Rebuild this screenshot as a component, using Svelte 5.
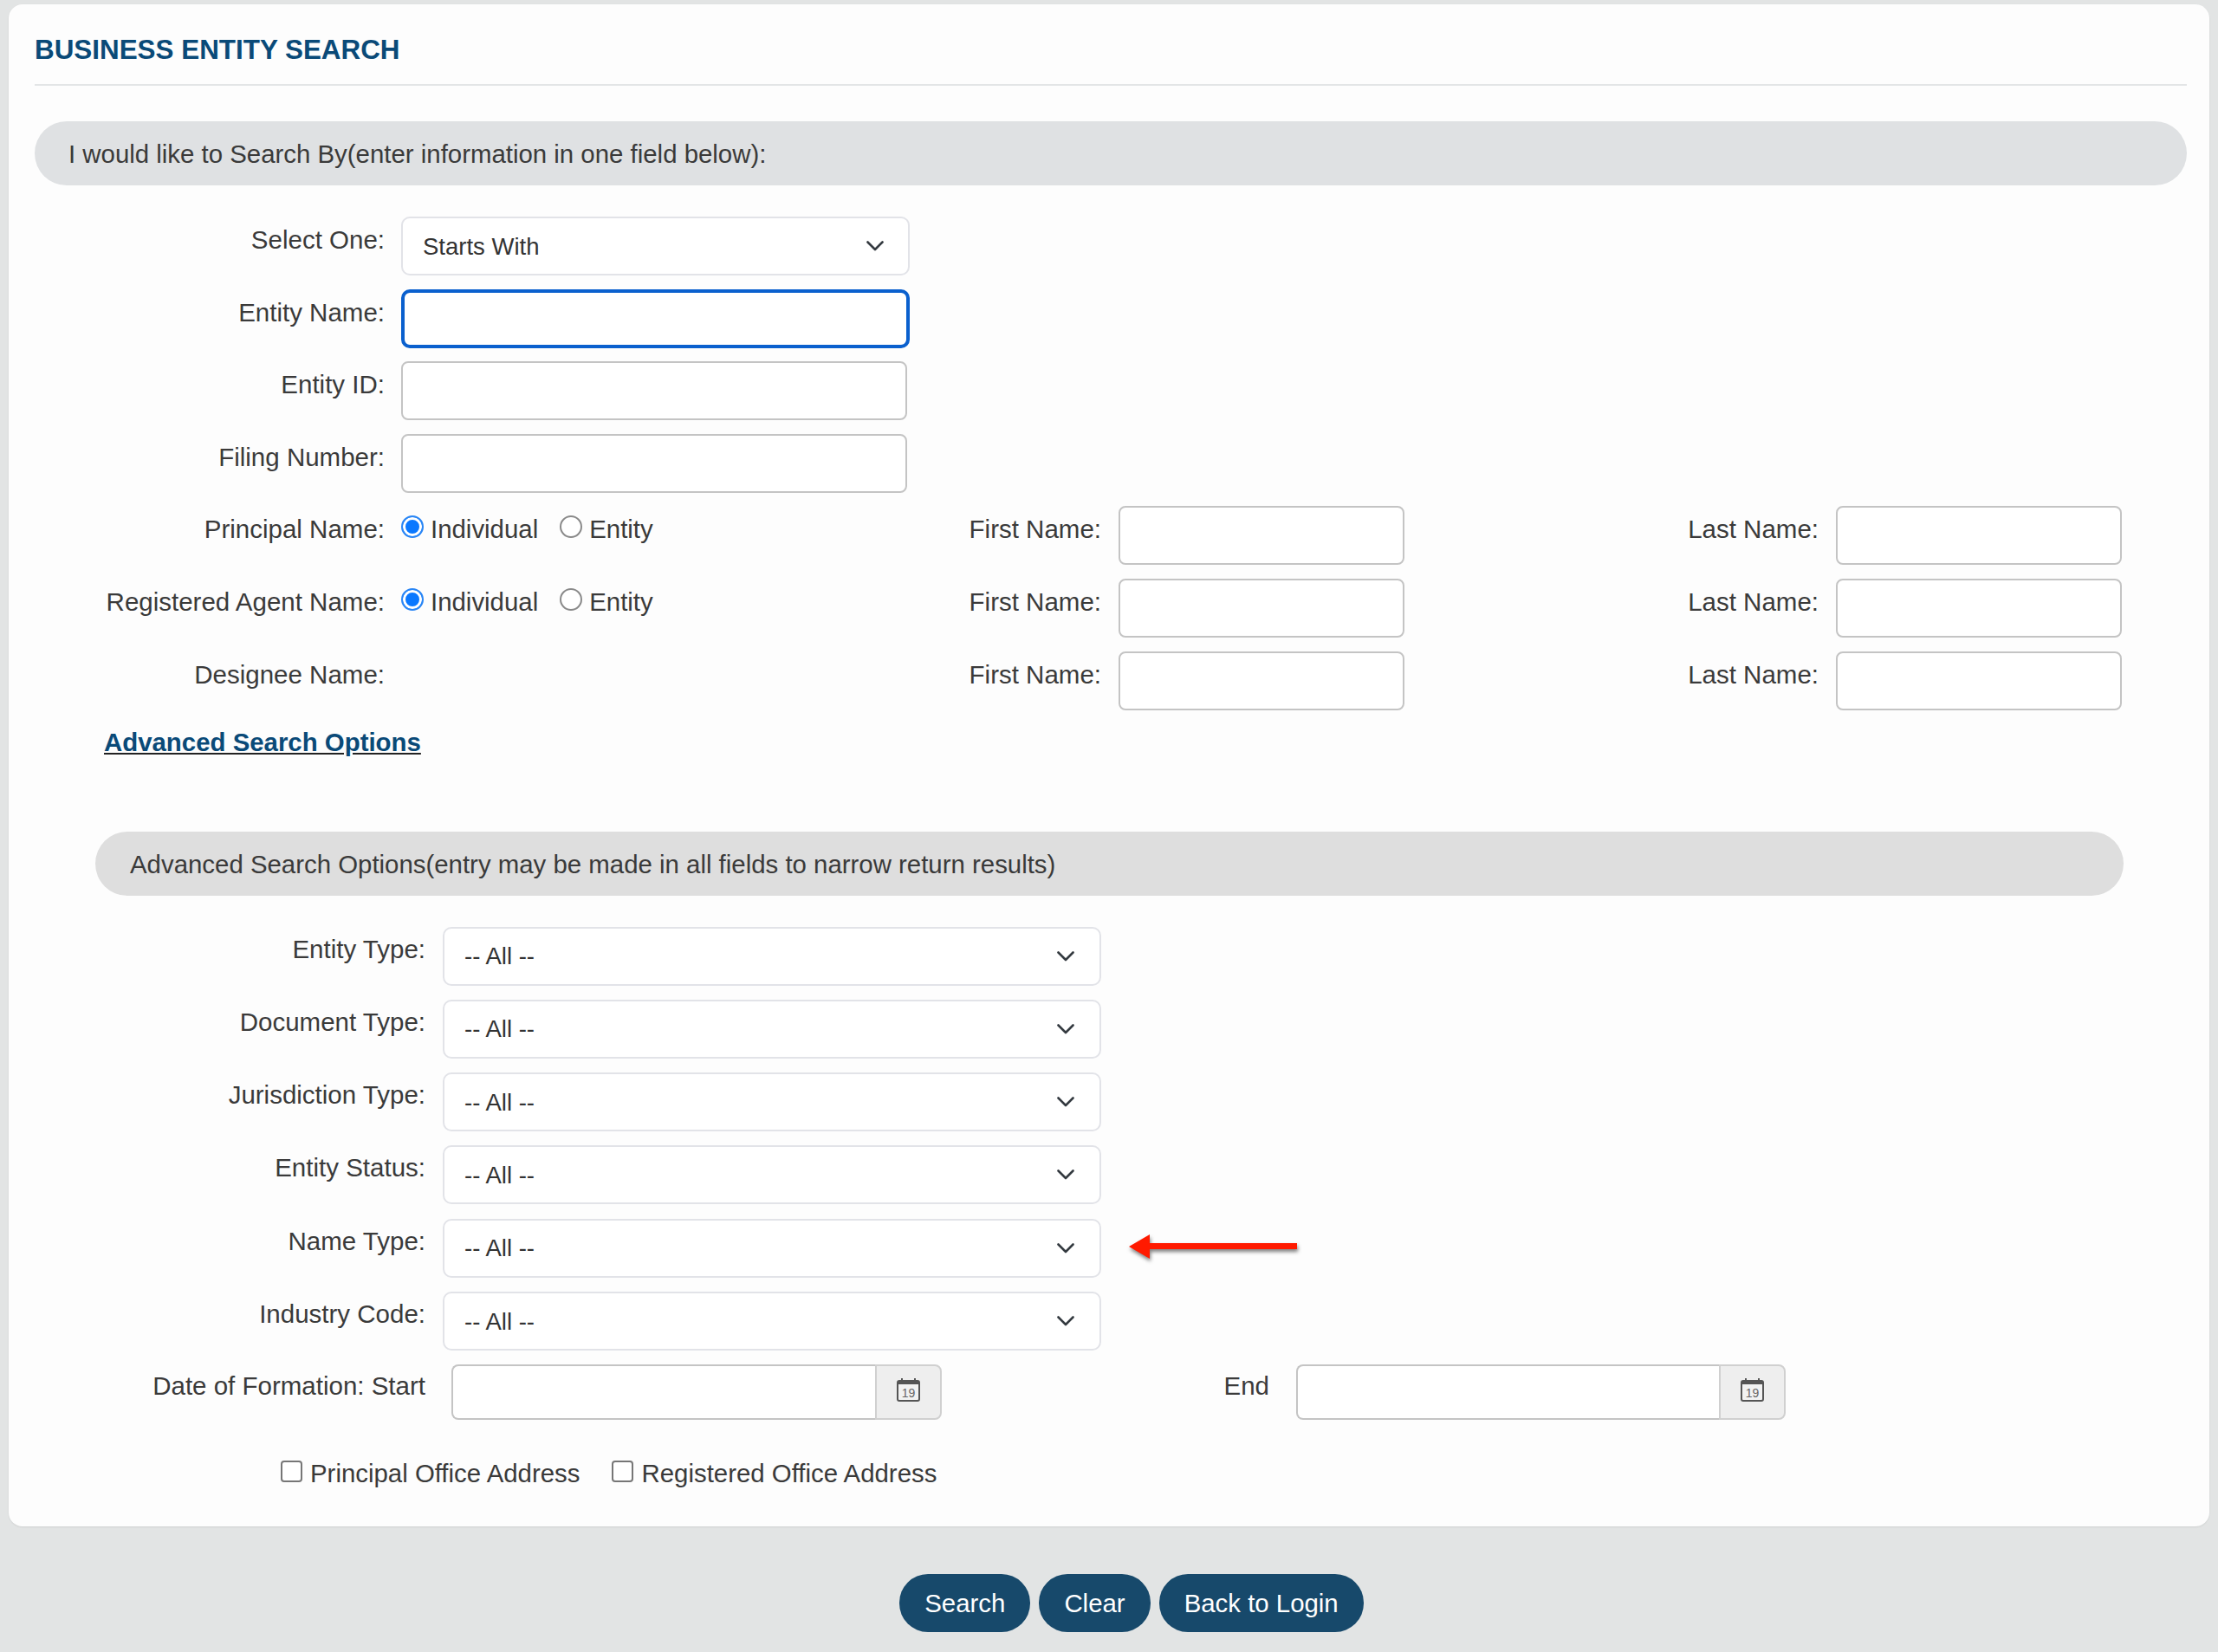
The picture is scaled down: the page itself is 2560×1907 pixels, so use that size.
<script lang="ts">
  const nameRows = [
    { label: 'Principal Name:', radios: true },
    { label: 'Registered Agent Name:', radios: true },
    { label: 'Designee Name:', radios: false }
  ];
  const advancedSelects = [
    'Entity Type:',
    'Document Type:',
    'Jurisdiction Type:',
    'Entity Status:',
    'Name Type:',
    'Industry Code:'
  ];
</script>

{#snippet chevron()}
  <svg class="chevron" viewBox="0 0 20 12" width="20" height="12" aria-hidden="true">
    <path d="M1.5 1.5 10 10l8.5-8.5" fill="none" stroke="#343a40" stroke-width="2.6" stroke-linecap="round" stroke-linejoin="round" />
  </svg>
{/snippet}

{#snippet dateField()}
  <div class="date-group">
    <input class="date-input" type="text" />
    <span class="date-addon">
      <span class="calendar"><span class="calendar-day">19</span></span>
    </span>
  </div>
{/snippet}

<div class="page">
  <main class="card">
    <h1 class="title">BUSINESS ENTITY SEARCH</h1>

    <div class="pill">I would like to Search By(enter information in one field below):</div>

    <div class="rows">
      <div class="row">
        <span class="label">Select One:</span>
        <div class="select-wrap basic-select">
          <select><option>Starts With</option></select>
          {@render chevron()}
        </div>
      </div>
      <div class="row">
        <span class="label">Entity Name:</span>
        <input class="field focused" type="text" />
      </div>
      <div class="row">
        <span class="label">Entity ID:</span>
        <input class="field wide" type="text" />
      </div>
      <div class="row">
        <span class="label">Filing Number:</span>
        <input class="field wide" type="text" />
      </div>

      {#each nameRows as r}
        <div class="row name-row">
          <span class="label">{r.label}</span>
          <div class="radios">
            {#if r.radios}
              <label class="radio-item"><input type="radio" name={r.label} checked />Individual</label>
              <label class="radio-item"><input type="radio" name={r.label} />Entity</label>
            {/if}
          </div>
          <span class="label first-label">First Name:</span>
          <input class="field short" type="text" />
          <span class="label last-label">Last Name:</span>
          <input class="field short" type="text" />
        </div>
      {/each}
    </div>

    <a class="adv-link" href="#advanced">Advanced Search Options</a>

    <section class="advanced" id="advanced">
      <div class="pill">Advanced Search Options(entry may be made in all fields to narrow return results)</div>

      <div class="adv-rows">
        {#each advancedSelects as label}
          <div class="adv-row">
            <span class="label">{label}</span>
            <div class="select-wrap adv-select">
              <select><option>-- All --</option></select>
              {@render chevron()}
            </div>
            {#if label === 'Name Type:'}
              <svg class="red-arrow" viewBox="0 0 200 40" width="200" height="40" aria-hidden="true">
                <path d="M1 18 25 4v10h170v7H25v11z" fill="#ff1a00" />
              </svg>
            {/if}
          </div>
        {/each}
      </div>

      <div class="date-row">
        <span class="label date-label">Date of Formation: Start</span>
        {@render dateField()}
        <span class="label end-label">End</span>
        {@render dateField()}
      </div>

      <div class="checks">
        <label class="check-item"><input type="checkbox" />Principal Office Address</label>
        <label class="check-item"><input type="checkbox" />Registered Office Address</label>
      </div>
    </section>
  </main>

  <footer class="actions">
    <button type="button">Search</button>
    <button type="button">Clear</button>
    <button type="button">Back to Login</button>
  </footer>
</div>

<style>
  :global(body) {
    margin: 0;
    background: #e2e4e4;
  }
  .page {
    height: 1907px;
    padding-top: 5px;
    box-sizing: border-box;
    font-family: "Liberation Sans", Arial, sans-serif;
    font-size: 29.4px;
    color: #3a3a3a;
  }
  .card {
    height: 1757px;
    margin: 0 10px;
    padding: 0 26px 0 30px;
    box-sizing: border-box;
    background: #fdfdfd;
    border-radius: 16px;
    box-shadow: 0 1px 2px rgba(0, 0, 0, 0.08);
  }
  .title {
    margin: 0;
    height: 94px;
    padding-top: 23px;
    line-height: 60px;
    font-size: 31.4px;
    font-weight: 700;
    color: #0a4a78;
    border-bottom: 2px solid #e3e5e6;
    box-sizing: border-box;
  }
  .pill {
    height: 74px;
    margin-top: 41px;
    padding-left: 39px;
    line-height: 76px;
    background: #dfe1e3;
    border-radius: 37px;
  }
  .rows {
    margin-top: 36px;
    display: flex;
    flex-direction: column;
    gap: 15.6px;
  }
  .row {
    display: grid;
    grid-template-columns: 404px 1fr;
    column-gap: 19px;
    height: 68px;
    align-items: start;
  }
  .label {
    text-align: right;
    line-height: 34px;
    padding-top: 9px;
    font-size: 29.5px;
    white-space: nowrap;
  }
  .row .label {
    padding-top: 10px;
  }
  .field {
    height: 68px;
    box-sizing: border-box;
    background: #fff;
    border: 2px solid #c4c4c4;
    border-radius: 8px;
    outline: none;
    margin: 0;
  }
  .field.focused {
    width: 587px;
    border: 4px solid #0a60ce;
    border-radius: 10px;
  }
  .field.wide {
    width: 584px;
  }
  .field.short {
    width: 330px;
  }
  .name-row {
    grid-template-columns: 404px 561px 286px 330px 498px 330px;
    column-gap: 0;
  }
  .radios {
    display: flex;
    gap: 25px;
    padding-left: 19px;
    padding-top: 10px;
  }
  .radio-item,
  .check-item {
    display: flex;
    align-items: flex-start;
    line-height: 34px;
    white-space: nowrap;
  }
  .radio-item input {
    appearance: none;
    width: 26px;
    height: 26px;
    margin: 1px 8px 0 0;
    border: 2px solid #8a8a8a;
    border-radius: 50%;
    background: #fff;
    box-sizing: border-box;
  }
  .radio-item input:checked {
    border-color: #2a86f5;
    background: #0a78ff;
    box-shadow: inset 0 0 0 3px #fff;
  }
  .first-label {
    padding-right: 20px;
  }
  .last-label {
    padding-right: 20px;
  }
  .select-wrap {
    position: relative;
    height: 68px;
  }
  .select-wrap select {
    appearance: none;
    display: block;
    width: 100%;
    height: 100%;
    box-sizing: border-box;
    padding: 0 0 0 23px;
    font: inherit;
    font-size: 27.5px;
    color: #333;
    background: #fff;
    border: 2px solid #e2e3e8;
    border-radius: 10px;
    outline: none;
  }
  .chevron {
    position: absolute;
    right: 30px;
    top: 28px;
    pointer-events: none;
  }
  .adv-select .chevron {
    right: 31px;
  }
  .basic-select {
    width: 587px;
  }
  .adv-link {
    display: block;
    width: fit-content;
    margin: 17px 0 0 80px;
    line-height: 40px;
    font-size: 29.4px;
    font-weight: 700;
    color: #0a4a78;
    text-decoration-color: #222;
  }
  .advanced {
    margin: 0 73px 0 70px;
  }
  .advanced .pill {
    margin-top: 83px;
    padding-left: 40px;
    background: #dedede;
  }
  .adv-rows {
    margin-top: 36px;
    display: flex;
    flex-direction: column;
    gap: 16.3px;
  }
  .adv-row {
    position: relative;
    display: grid;
    grid-template-columns: 381px 760px;
    column-gap: 20px;
    height: 68px;
    align-items: start;
  }
  .red-arrow {
    position: absolute;
    left: 1192px;
    top: 14px;
    overflow: visible;
    filter: drop-shadow(1px 3px 2px rgba(0, 0, 0, 0.5));
  }
  .date-row {
    display: grid;
    grid-template-columns: 381px 596px 409px 565px;
    height: 64px;
    margin-top: 15.5px;
    align-items: start;
  }
  .date-label {
    padding-top: 8px;
  }
  .end-label {
    padding: 8px 31px 0 0;
  }
  .date-group {
    display: flex;
    height: 64px;
    margin-left: 30px;
    box-sizing: border-box;
    border-radius: 8px;
  }
  .end-label + .date-group {
    margin-left: 0;
  }
  .date-input {
    flex: 1;
    min-width: 0;
    margin: 0;
    box-sizing: border-box;
    background: #fff;
    border: 2px solid #c4c4c4;
    border-right: 0;
    border-radius: 8px 0 0 8px;
    outline: none;
  }
  .date-addon {
    flex: none;
    width: 77px;
    box-sizing: border-box;
    display: flex;
    align-items: center;
    justify-content: center;
    background: #eeeeee;
    border: 2px solid #d0d0d0;
    border-radius: 0 8px 8px 0;
  }
  .calendar {
    position: relative;
    display: flex;
    align-items: center;
    justify-content: center;
    width: 27px;
    height: 25px;
    box-sizing: border-box;
    padding-top: 1px;
    margin-top: -2px;
    border: 2px solid #555;
    border-top-width: 5px;
    border-radius: 3px;
    background: #f2f2f2;
  }
  .calendar::before,
  .calendar::after {
    content: '';
    position: absolute;
    top: -7px;
    width: 2px;
    height: 3px;
    background: #555;
  }
  .calendar::before {
    left: 3px;
  }
  .calendar::after {
    right: 3px;
  }
  .calendar-day {
    font-size: 14px;
    line-height: 1;
    color: #666;
  }
  .checks {
    display: flex;
    gap: 37px;
    margin: 45px 0 0 214px;
  }
  .check-item input {
    appearance: none;
    width: 25px;
    height: 25px;
    margin: 2px 9px 0 0;
    background: #fff;
    border: 2px solid #767676;
    border-radius: 4px;
    box-sizing: border-box;
  }
  .actions {
    display: flex;
    justify-content: center;
    gap: 10px;
    margin-top: 55px;
    padding-left: 52px;
  }
  .actions button {
    height: 67px;
    padding: 0 29px;
    font: inherit;
    color: #fff;
    background: #17496b;
    border: 0;
    border-radius: 33px;
  }
</style>
